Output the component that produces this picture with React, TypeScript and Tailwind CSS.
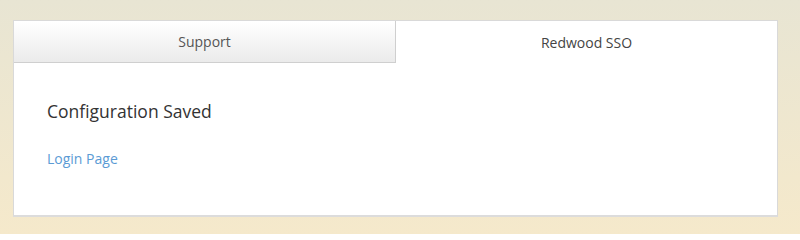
export default function App() {
  return (
    <div className="h-[234px] w-full bg-gradient-to-b from-[#e8e5d3] to-[#f5e9cb] pl-[13px] pt-[20px] font-['Open_Sans',sans-serif]">
      <div className="w-[765px] border border-[#d9d9d9] border-b-2 border-b-[#dcdcdc] bg-white">
        <div className="flex h-[42px]">
          <div className="flex flex-1 items-center justify-center border-r border-b border-[#cfcfcf] bg-gradient-to-b from-white to-[#ebebeb] text-[14px] text-[#555]">
            Support
          </div>
          <div className="flex flex-1 items-center justify-center bg-white text-[14px] text-[#444]">
            Redwood SSO
          </div>
        </div>
        <div className="h-[152px] px-[33px] pt-[36px]">
          <h2 className="text-[17.5px] font-medium leading-[24px] text-[#333]">Configuration Saved</h2>
          <a href="#" className="mt-[26px] block text-[14px] leading-[20px] text-[#5b9bd5]">
            Login Page
          </a>
        </div>
      </div>
    </div>
  );
}
